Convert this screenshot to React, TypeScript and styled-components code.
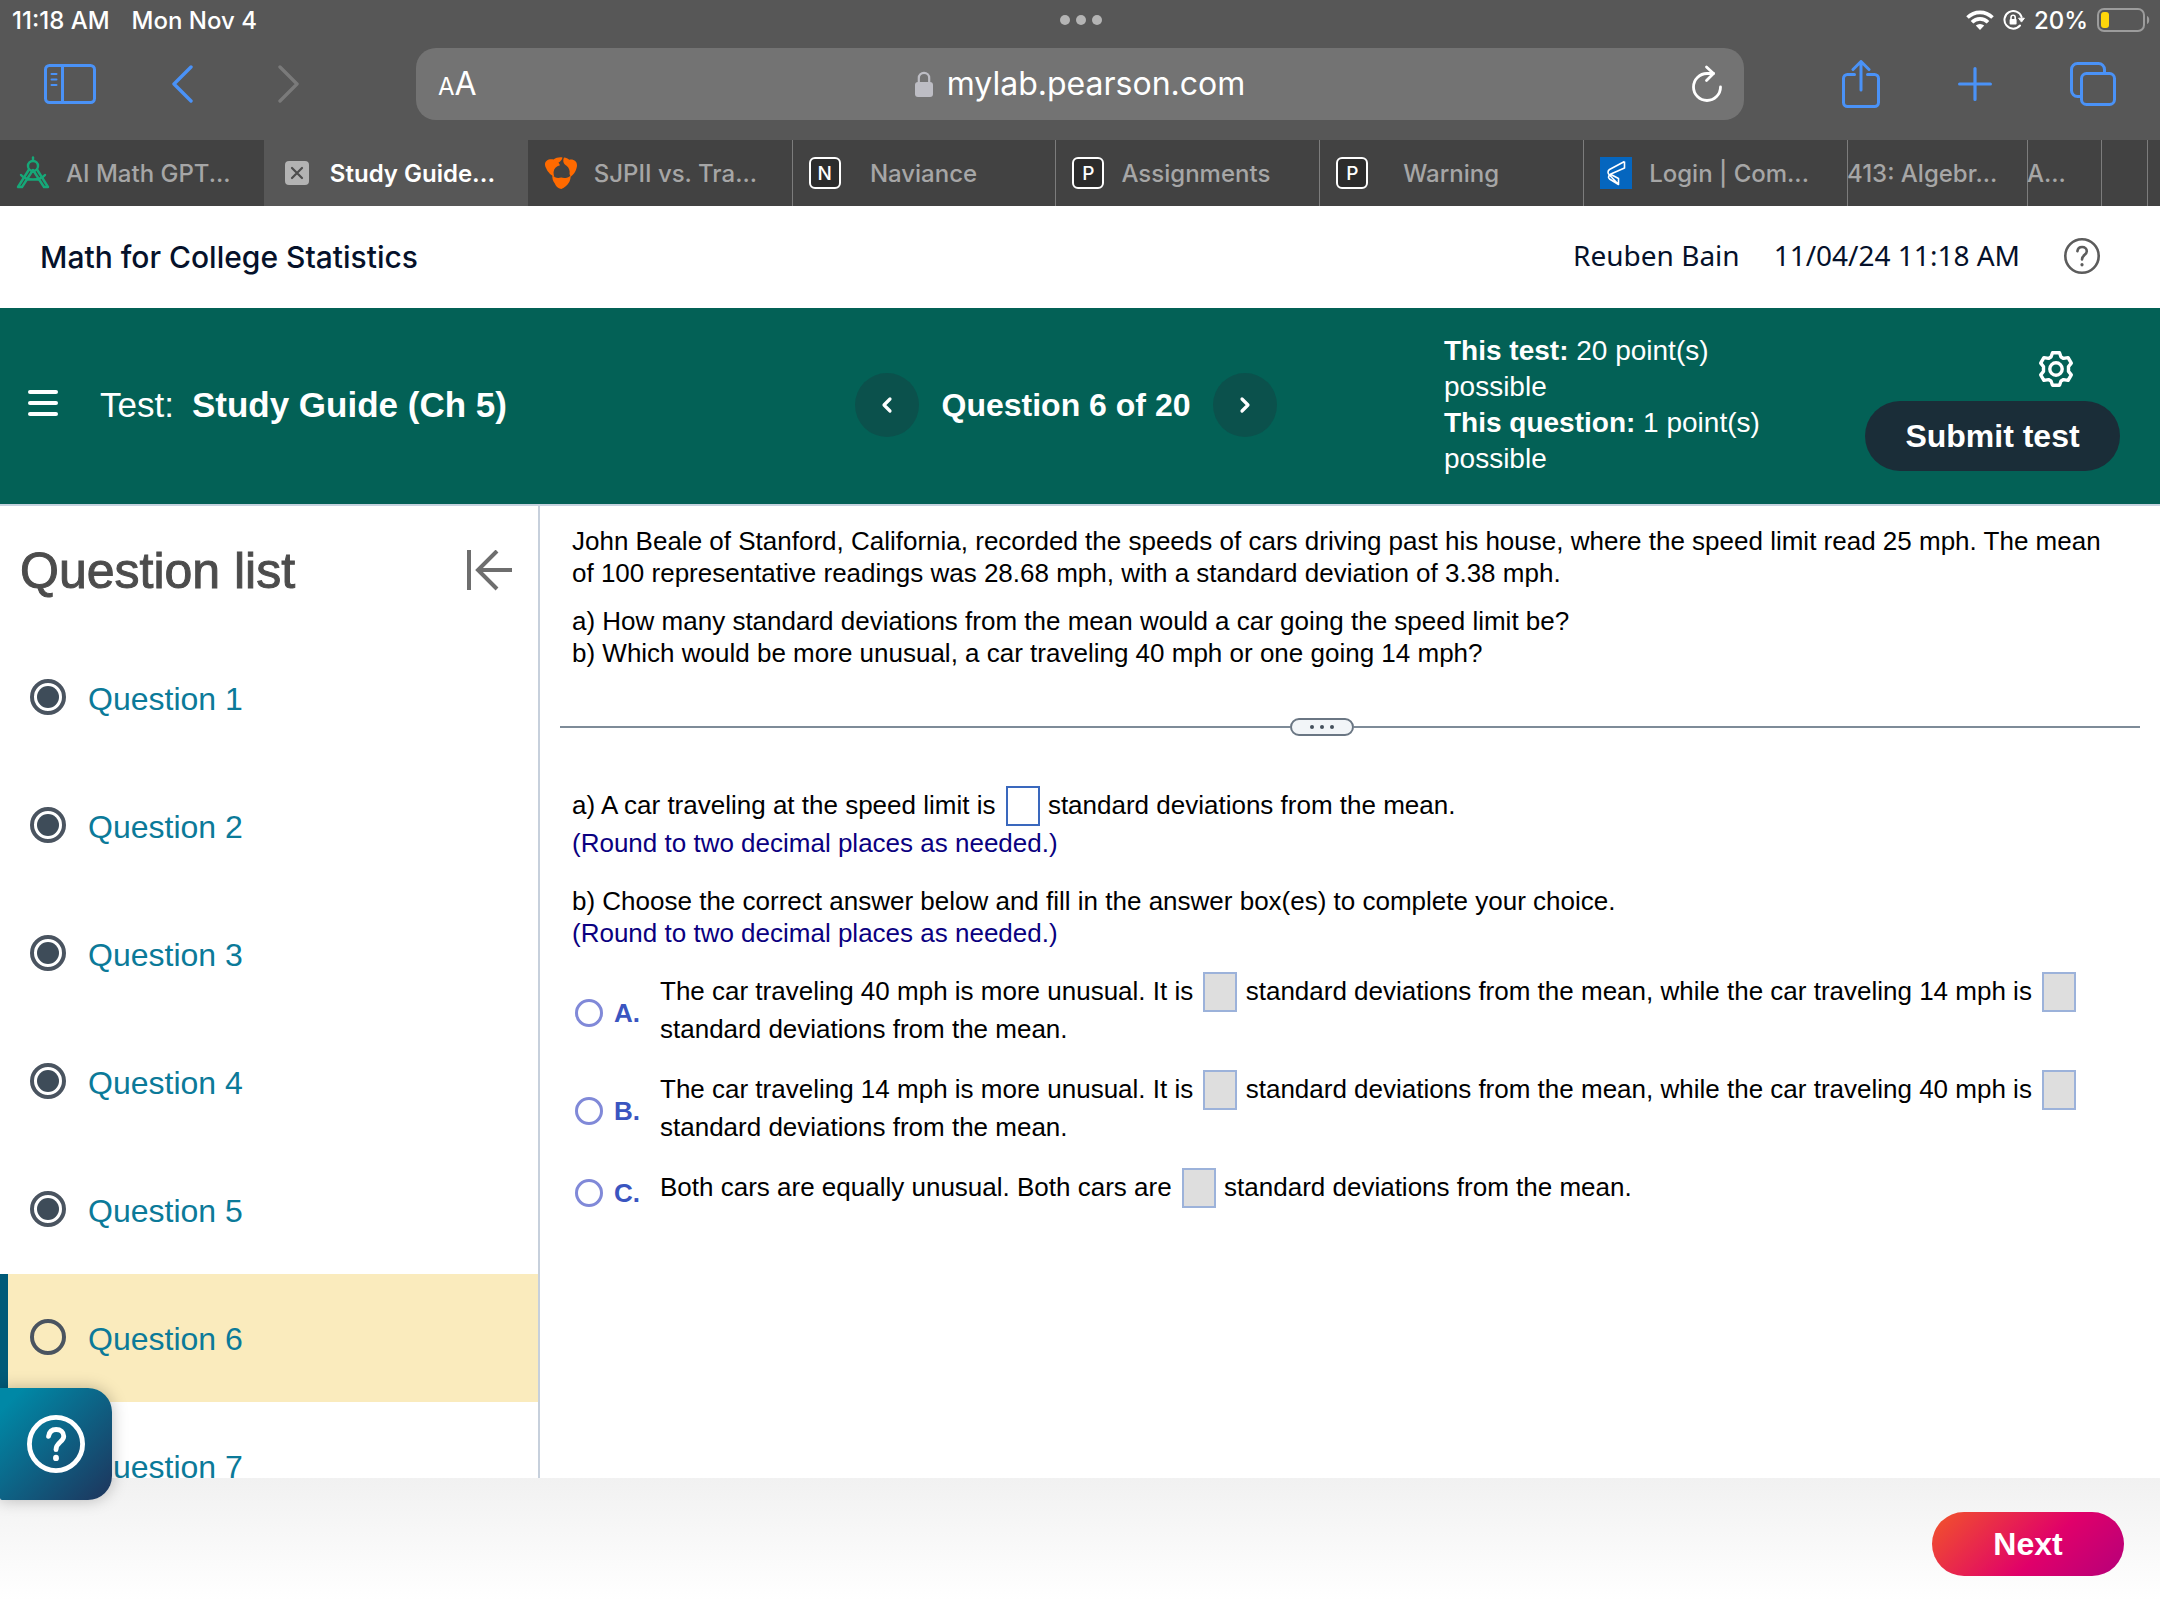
import React, { useState } from "react";
import styled, { createGlobalStyle } from "styled-components";

const sans = `"Liberation Sans", Arial, Helvetica, sans-serif`;
const system = `Inter, "Liberation Sans", sans-serif`;

const GlobalStyle = createGlobalStyle`
  *, *::before, *::after { box-sizing: border-box; }
  body { margin: 0; background: #fff; color: #000; font-family: ${sans}; }
  h1, h2, p, ul { margin: 0; padding: 0; }
  ul { list-style: none; }
  button { border: 0; padding: 0; background: none; color: inherit; font: inherit; cursor: pointer; }
  svg { display: block; flex: none; }
`;

/* ---------- Page frame ---------- */

const Page = styled.div`
  display: flex;
  flex-direction: column;
  height: 100vh;
  overflow: hidden;
`;

/* ---------- Browser chrome ---------- */

const Chrome = styled.div`
  flex: none;
  background: #575757;
  color: #fff;
  font-family: ${system};
`;

const StatusBar = styled.div`
  display: grid;
  grid-template-columns: 1fr auto 1fr;
  align-items: center;
  height: 40px;
  padding: 0 10px 0 12px;
  font-size: 24px;
  font-weight: 500;
`;

const StatusGroup = styled.div<{ $end?: boolean }>`
  display: flex;
  align-items: center;
  justify-content: ${(p) => (p.$end ? "flex-end" : "flex-start")};
  gap: ${(p) => (p.$end ? 9 : 22)}px;
`;

const ToolBar = styled.div`
  display: flex;
  align-items: center;
  height: 100px;
  padding: 0 44px 12px;
`;

const NavGroup = styled.div`
  display: grid;
  grid-template-columns: 127px 107px auto;
  align-items: center;
  justify-content: start;
  flex: none;
  width: 372px;
`;

const ActionGroup = styled.div`
  display: flex;
  align-items: center;
  justify-content: flex-end;
  flex: none;
  gap: 78px;
  width: 372px;
`;

const ChromeButton = styled.button<{ $dim?: boolean }>`
  justify-self: start;
  color: ${(p) => (p.$dim ? "#7a7a7a" : "#4a92f7")};
`;

const AddressField = styled.div`
  display: grid;
  grid-template-columns: 1fr auto 1fr;
  align-items: center;
  flex: 1;
  height: 72px;
  padding: 0 22px;
  border-radius: 20px;
  background: #737373;
`;

const TextSizeButton = styled.button`
  justify-self: start;
  padding-top: 2px;
  font-size: 32px;
  line-height: 40px;

  small {
    font-size: 24px;
  }
`;

const Address = styled.span`
  display: flex;
  align-items: center;
  gap: 14px;
  font-size: 32px;
  line-height: 40px;
`;

const ReloadButton = styled.button`
  justify-self: end;
`;

const TabStrip = styled.div`
  display: flex;
  height: 66px;
  background: #424242;
`;

const Tab = styled.button<{ $active?: boolean; $width?: number; $line?: boolean }>`
  display: flex;
  align-items: center;
  flex: ${(p) => (p.$width ? `0 0 ${p.$width}px` : "1 1 0")};
  min-width: 0;
  overflow: hidden;
  background: ${(p) => (p.$active ? "#575757" : "transparent")};
  box-shadow: ${(p) => (p.$line ? "inset 1px 0 #7c7c7c" : "none")};
  color: ${(p) => (p.$active ? "#fff" : "#a6a6a6")};
  font-size: 24px;
  font-weight: ${(p) => (p.$active ? 600 : 500)};
  white-space: nowrap;
`;

const TabIcon = styled.span`
  display: flex;
  justify-content: center;
  flex: 0 0 66px;
`;

const TabTitle = styled.span`
  flex: 1 0 auto;
  text-align: center;
`;

const TabEnd = styled.span`
  flex: 0 1 66px;
`;

const LetterIcon = styled.span`
  display: flex;
  align-items: center;
  justify-content: center;
  width: 32px;
  height: 32px;
  border: 2px solid #fff;
  border-radius: 6px;
  background: #2c2c2c;
  color: #fff;
  font-size: 19px;
`;

/* ---------- Course header ---------- */

const CourseHeader = styled.header`
  display: flex;
  align-items: center;
  flex: none;
  height: 102px;
  padding: 0 60px 2px 40px;
  color: #05112a;
`;

const CourseName = styled.h1`
  flex: 1;
  padding-top: 2px;
  font-family: ${system};
  font-size: 30px;
  font-weight: 500;
`;

const HeaderText = styled.span`
  margin-left: 34px;
  padding-bottom: 2px;
  font-family: "Noto Sans", ${sans};
  font-size: 28px;
`;

const HelpButton = styled.button`
  margin-left: 44px;
`;

/* ---------- Test bar ---------- */

const TestBar = styled.div`
  display: flex;
  align-items: center;
  flex: none;
  height: 198px;
  padding: 0 40px 2px 28px;
  border-bottom: 2px solid #c7d3df;
  background: #036156;
  color: #fff;
`;

const TestTitle = styled.h2`
  display: flex;
  flex: 1;
  gap: 18px;
  margin-left: 42px;
  font-size: 35px;
  font-weight: 700;
  line-height: 40px;
  white-space: nowrap;

  span {
    font-weight: 400;
  }
`;

const Pager = styled.div`
  display: flex;
  align-items: center;
  justify-content: space-between;
  flex: none;
  width: 422px;
  margin-right: 167px;
  font-size: 32px;
  font-weight: 700;
`;

const PagerButton = styled.button`
  display: flex;
  align-items: center;
  justify-content: center;
  width: 64px;
  height: 64px;
  border-radius: 50%;
  background: #0b514c;
`;

const Points = styled.div`
  flex: none;
  width: 340px;
  margin-right: 81px;
  font-size: 28px;
  line-height: 36px;
`;

const TestActions = styled.div`
  display: flex;
  flex-direction: column;
  align-items: flex-end;
  flex: none;
  gap: 14px;
  padding-top: 12px;
`;

const SettingsButton = styled.button`
  margin-right: 46px;
`;

const SubmitButton = styled.button`
  width: 255px;
  height: 70px;
  border-radius: 35px;
  background: #1a2d38;
  font-size: 32px;
  font-weight: 700;
`;

/* ---------- Work area ---------- */

const WorkArea = styled.div`
  display: flex;
  flex: 1;
  min-height: 0;
`;

const SideBar = styled.nav`
  flex: 0 0 540px;
  overflow: hidden;
  border-right: 2px solid #c7d0dc;
`;

const SideHeader = styled.div`
  display: flex;
  align-items: center;
  justify-content: space-between;
  height: 128px;
  padding: 2px 26px 0 20px;
  color: #4c4c4c;
`;

const SideTitle = styled.h2`
  font-size: 50px;
  font-weight: 400;
  -webkit-text-stroke: 1px currentColor;
`;

const QuestionRow = styled.li<{ $current?: boolean }>`
  display: flex;
  align-items: center;
  gap: 22px;
  height: 128px;
  padding-left: 22px;
  border-left: 8px solid ${(p) => (p.$current ? "#005a78" : "transparent")};
  background: ${(p) => (p.$current ? "#faebbd" : "transparent")};
`;

const QuestionLink = styled.a`
  padding-top: 2px;
  color: #0b7a99;
  font-size: 32px;
  text-decoration: none;
`;

const Content = styled.main`
  flex: 1;
  min-width: 0;
  padding: 19px 20px 0;
  overflow: hidden;
  font-size: 26px;
  line-height: 32px;
`;

const Block = styled.div<{ $top?: number }>`
  margin-top: ${(p) => p.$top ?? 0}px;
  padding: 0 12px;
`;

const Hint = styled.p`
  color: #0a0080;
`;

const Divider = styled.div`
  display: flex;
  align-items: center;
  margin: 49px 0 50px;
`;

const Rule = styled.span<{ $extra?: number }>`
  flex: 1 1 ${(p) => p.$extra ?? 0}px;
  height: 2px;
  background: #7e8b98;
`;

const DividerHandle = styled.button`
  display: flex;
  align-items: center;
  justify-content: center;
  gap: 6px;
  width: 64px;
  height: 18px;
  border: 2px solid #6a7683;
  border-radius: 9px;
  background: #f2f5f8;

  i {
    width: 4px;
    height: 4px;
    border-radius: 50%;
    background: #45505c;
  }
`;

const AnswerInput = styled.input`
  width: 34px;
  height: 40px;
  margin: 0 1px 1px 3px;
  padding: 0 4px;
  border: 2px solid #3a68bd;
  border-radius: 0;
  background: #fff;
  font: inherit;
  vertical-align: -1px;

  &:disabled {
    border-color: #9cb2da;
    background: #dedede;
  }
`;

const ChoiceList = styled.div`
  display: flex;
  flex-direction: column;
  gap: 25px;
  margin-top: 23px;
  padding: 0 12px 0 15px;
`;

const Choice = styled.div`
  display: grid;
  grid-template-columns: 39px 46px 1fr;
  align-items: center;
`;

const Radio = styled.input`
  appearance: none;
  width: 28px;
  height: 28px;
  margin: 8px 0 0;
  border: 3px solid #8089d8;
  border-radius: 50%;
  background: #fff;

  &:checked {
    border-width: 8px;
  }
`;

const Letter = styled.label`
  padding-top: 8px;
  color: #3a55c0;
  font-weight: 700;
`;

/* ---------- Footer ---------- */

const Footer = styled.footer`
  display: flex;
  align-items: flex-start;
  justify-content: flex-end;
  flex: none;
  height: 142px;
  padding: 34px 36px 0;
  background: linear-gradient(#f1f1f1, #fff 86%);
`;

const NextButton = styled.button`
  width: 192px;
  height: 64px;
  border-radius: 32px;
  background: linear-gradient(135deg, #f04e2f 5%, #e0006a 58%, #b5007a);
  color: #fff;
  font-size: 32px;
  font-weight: 700;
`;

const HelpWidget = styled.button`
  position: fixed;
  left: 0;
  bottom: 120px;
  display: flex;
  align-items: center;
  justify-content: center;
  width: 112px;
  height: 112px;
  border-radius: 0 24px 24px 2px;
  background: linear-gradient(135deg, #0088a6 10%, #1e345c);
  box-shadow: 0 0 16px rgba(0, 0, 0, 0.25);
  color: #fff;
`;

/* ---------- Icons ---------- */

const line = {
  fill: "none",
  stroke: "currentColor",
  strokeLinecap: "round",
  strokeLinejoin: "round",
} as const;

const DotsIcon = () => (
  <svg width="42" height="10" viewBox="0 0 42 10" fill="#b4b4b4">
    <circle cx="5" cy="5" r="5" />
    <circle cx="21" cy="5" r="5" />
    <circle cx="37" cy="5" r="5" />
  </svg>
);

const WifiIcon = () => (
  <svg width="28" height="20" viewBox="0 0 28 20" fill="none" stroke="#fff" strokeWidth="3.6">
    <path d="M1.5 7.6a17.6 17.6 0 0 1 25 0" />
    <path d="M6 12.2a11.2 11.2 0 0 1 16 0" />
    <path d="M14 20l-4.2-4.4a6 6 0 0 1 8.4 0z" fill="#fff" stroke="none" />
  </svg>
);

const RotationLockIcon = () => (
  <svg width="22" height="20" viewBox="0 0 22 20" {...line} stroke="#fff" strokeWidth="2">
    <path d="M18.6 7A8.8 8.8 0 1 0 17 15.5" />
    <path d="M16 8.2h5.4l-2.7 3.6z" fill="#fff" strokeWidth="1" />
    <rect x="6.6" y="9" width="7" height="5.6" rx="1" fill="#fff" stroke="none" />
    <path d="M8 9V7.4a2.1 2.1 0 0 1 4.2 0V9" strokeWidth="1.6" />
  </svg>
);

const BatteryIcon = () => (
  <svg width="53" height="24" viewBox="0 0 53 24">
    <rect x="1" y="1" width="46" height="22" rx="6" fill="none" stroke="#9c9c9c" strokeWidth="2" />
    <rect x="4" y="4" width="8" height="16" rx="3" fill="#ffd60a" />
    <path d="M50 8c3 1 3 7 0 8z" fill="#9c9c9c" />
  </svg>
);

const SidebarIcon = () => (
  <svg width="52" height="40" viewBox="0 0 52 40" {...line} strokeWidth="3">
    <rect x="1.5" y="1.5" width="49" height="37" rx="4" />
    <path d="M18.5 2v36" />
    <path d="M7.5 10h5M7.5 15.5h5M7.5 21h5" strokeWidth="2" />
  </svg>
);

const ChevronIcon = ({ flip = false }: { flip?: boolean }) => (
  <svg width="22" height="38" viewBox="0 0 22 38" {...line} strokeWidth="3.4">
    <path d={flip ? "M2 2l17 17L2 36" : "M20 2L3 19l17 17"} />
  </svg>
);

const LockIcon = () => (
  <svg width="18" height="26" viewBox="0 0 18 26">
    <rect x="0" y="11" width="18" height="15" rx="3" fill="#bdbdc4" />
    <path d="M3.8 12V7a5.2 5.2 0 0 1 10.4 0v5" fill="none" stroke="#bdbdc4" strokeWidth="2.2" />
  </svg>
);

const ReloadIcon = () => (
  <svg width="30" height="38" viewBox="0 0 30 38" {...line} stroke="#fff" strokeWidth="2.8">
    <path d="M28.5 22A13.5 13.5 0 1 1 15 8.5h6.5" />
    <path d="M14.5 2l7 6.5-7 7" />
  </svg>
);

const ShareIcon = () => (
  <svg width="38" height="48" viewBox="0 0 38 48" {...line} strokeWidth="3">
    <path d="M12.5 14.5H5.5a4 4 0 0 0-4 4v24a4 4 0 0 0 4 4h27a4 4 0 0 0 4-4v-24a4 4 0 0 0-4-4h-7" />
    <path d="M19 30V2M11 9.5L19 1.5l8 8" />
  </svg>
);

const PlusIcon = () => (
  <svg width="34" height="34" viewBox="0 0 34 34" {...line} strokeWidth="3.2">
    <path d="M17 1.6v30.8M1.6 17h30.8" />
  </svg>
);

const WindowsIcon = () => (
  <svg width="46" height="44" viewBox="0 0 46 44" {...line} strokeWidth="3">
    <rect x="11.5" y="11.5" width="33" height="31" rx="5" />
    <path d="M11.5 34.5H7.5a6 6 0 0 1-6-6v-21a6 6 0 0 1 6-6h21a6 6 0 0 1 6 6v4" />
  </svg>
);

const CompassIcon = () => (
  <svg width="34" height="34" viewBox="0 0 34 34" {...line} stroke="#16a878" strokeWidth="2.4">
    <path d="M17 1.5v3" />
    <circle cx="17" cy="10" r="5" />
    <path d="M13 13.5L2 31h4l11-17 11 17h4L21 13.5" />
    <path d="M11.5 23.5h11M5 19c5 6 19 6 24 0" />
  </svg>
);

const CloseTabIcon = () => (
  <svg width="24" height="24" viewBox="0 0 24 24">
    <rect width="24" height="24" rx="4" fill="#b3b3b3" />
    <path d="M7 7l10 10M17 7L7 17" stroke="#4d4d4d" strokeWidth="2.2" strokeLinecap="round" />
  </svg>
);

const ShieldIcon = () => (
  <svg width="34" height="32" viewBox="0 0 34 32" fill="#ff6a00">
    <path d="M1 8C.6 4 4 1.6 9.5 2.4 12 .6 15.5-.2 18.5.4c-.5 2.5-2 4-4 5.2l1.5 2.6C12 9 10 11.5 9.6 15c-.1 1.6.1 3 .6 4.5C7 18.5 3.8 15 2.4 11.8 1.5 10.5 1.1 9.2 1 8z" />
    <path d="M20 .5c2.2.4 4 1.2 5.3 2.2C30 2 33.2 4.5 33 8.5c-.2 4-2.6 8.6-6.5 11.5-.2-1.2-.5-2-1-3 .6-3.5-.6-6.5-3-8.2C20.5 7.5 19.5 6 19.3 4.5 19.2 3 19.4 1.6 20 .5z" />
    <path d="M8.4 18c2.2 2.8 5 3.6 8.8 2.6 3.6 1 6.8.2 9.4-2.2.2 3-.6 5.4-2 7.6-1.8 2.8-4.2 4.8-7.4 6-3.4-1-5.6-3-6.4-5.6C8.8 24 8 21 8.4 18z" />
  </svg>
);

const RibbonIcon = () => (
  <svg width="32" height="32" viewBox="0 0 32 32">
    <rect width="32" height="32" fill="#0566bf" />
    <path
      d="M24.5 4.500L9.500 12.500C7.500 14 7.500 16.500 9.500 18L18.500 27.500V21.500L10 17M24.500 4.500V11L12 16.500C8.500 18 7.500 20 9.500 22L18.500 27.500"
      fill="none"
      stroke="#fff"
      strokeWidth="1.6"
      strokeLinejoin="round"
    />
  </svg>
);

const HelpIcon = ({ size, weight, color }: { size: number; weight: number; color: string }) => (
  <svg width={size} height={size} viewBox="0 0 36 36" fill="none" stroke={color} strokeWidth={weight} strokeLinecap="round">
    <circle cx="18" cy="18" r={18 - weight / 2} />
    <path d="M13.4 13.2c.4-2.8 2.3-4.2 4.7-4.2 2.7 0 4.7 1.7 4.7 4.2 0 3.6-4.8 3.7-4.8 8.3" />
    <path d="M18 26.5v.3" strokeWidth={weight + 0.6} />
  </svg>
);

const MenuIcon = () => (
  <svg width="30" height="30" viewBox="0 0 30 30" fill="#fff">
    <rect width="30" height="4" rx="2" />
    <rect y="11" width="30" height="4" rx="2" />
    <rect y="22" width="30" height="4" rx="2" />
  </svg>
);

const SmallChevron = ({ flip = false }: { flip?: boolean }) => (
  <svg width="12" height="18" viewBox="0 0 12 18" {...line} strokeWidth="3.2">
    <path d={flip ? "M3 3l6 6-6 6" : "M9 3L3 9l6 6"} />
  </svg>
);

const GearIcon = () => (
  <svg width="36" height="36" viewBox="0 0 36 36" {...line} stroke="#fff" strokeWidth="3.4">
    <path d="M14.5 1.8h7l1.5 4.2 2.5 1.4 4.6-.8 3.2 5.6-2.8 3.4v4.8l2.8 3.4-3.2 5.6-4.6-.8-2.5 1.4-1.5 4.2h-7L13 30l-2.5-1.4-4.6.8-3.2-5.6 2.8-3.4v-4.8l-2.8-3.4 3.2-5.6 4.6.8L13 6z" />
    <circle cx="18" cy="18" r="6.2" />
  </svg>
);

const CollapseIcon = () => (
  <svg width="46" height="42" viewBox="0 0 46 42" fill="none" stroke="#6e6e6e" strokeWidth="4">
    <path d="M3 0v40M11 20h35M31 1L12 20l19 19" />
  </svg>
);

const StatusIcon = ({ filled }: { filled: boolean }) => (
  <svg width="36" height="38" viewBox="0 0 36 38">
    <circle cx="18" cy="18" r="16" fill={filled ? "#fff" : "none"} stroke="#4a5460" strokeWidth="4" />
    {filled && <circle cx="18" cy="18" r="11" fill="#3e4c59" />}
  </svg>
);

/* ---------- Data ---------- */

const tabs = [
  { title: "AI Math GPT...", icon: <CompassIcon /> },
  { title: "Study Guide...", icon: <CloseTabIcon />, active: true },
  { title: "SJPII vs. Tra...", icon: <ShieldIcon /> },
  { title: "Naviance", icon: <LetterIcon>N</LetterIcon>, line: true },
  { title: "Assignments", icon: <LetterIcon>P</LetterIcon>, line: true },
  { title: "Warning", icon: <LetterIcon>P</LetterIcon>, line: true },
  { title: "Login | Com...", icon: <RibbonIcon />, line: true },
];

const stackedTabs = [
  { title: "413: Algebr...", width: 180 },
  { title: "A...", width: 74 },
  { title: "", width: 46 },
  { title: "", width: 13 },
];

const questions = [1, 2, 3, 4, 5, 6, 7];
const currentQuestion = 6;

const Blank = ({ label, open = false }: { label: string; open?: boolean }) => (
  <AnswerInput type="text" aria-label={label} disabled={!open} />
);

const choices = [
  {
    letter: "A",
    body: (
      <>
        The car traveling 40 mph is more unusual. It is <Blank label="Deviations at 40 mph" /> standard
        deviations from the mean, while the car traveling 14 mph is <Blank label="Deviations at 14 mph" />{" "}
        standard deviations from the mean.
      </>
    ),
  },
  {
    letter: "B",
    body: (
      <>
        The car traveling 14 mph is more unusual. It is <Blank label="Deviations at 14 mph" /> standard
        deviations from the mean, while the car traveling 40 mph is <Blank label="Deviations at 40 mph" />{" "}
        standard deviations from the mean.
      </>
    ),
  },
  {
    letter: "C",
    body: (
      <>
        Both cars are equally unusual. Both cars are <Blank label="Deviations of both cars" /> standard
        deviations from the mean.
      </>
    ),
  },
];

/* ---------- App ---------- */

export default function App() {
  const [choice, setChoice] = useState<string | null>(null);

  return (
    <Page>
      <GlobalStyle />

      <Chrome>
        <StatusBar>
          <StatusGroup>
            <span>11:18 AM</span>
            <span>Mon Nov 4</span>
          </StatusGroup>
          <DotsIcon />
          <StatusGroup $end>
            <WifiIcon />
            <RotationLockIcon />
            <span>20%</span>
            <BatteryIcon />
          </StatusGroup>
        </StatusBar>

        <ToolBar>
          <NavGroup>
            <ChromeButton aria-label="Show sidebar"><SidebarIcon /></ChromeButton>
            <ChromeButton aria-label="Back"><ChevronIcon /></ChromeButton>
            <ChromeButton aria-label="Forward" $dim><ChevronIcon flip /></ChromeButton>
          </NavGroup>
          <AddressField>
            <TextSizeButton aria-label="Page settings"><small>A</small>A</TextSizeButton>
            <Address><LockIcon />mylab.pearson.com</Address>
            <ReloadButton aria-label="Reload"><ReloadIcon /></ReloadButton>
          </AddressField>
          <ActionGroup>
            <ChromeButton aria-label="Share"><ShareIcon /></ChromeButton>
            <ChromeButton aria-label="New tab"><PlusIcon /></ChromeButton>
            <ChromeButton aria-label="All tabs"><WindowsIcon /></ChromeButton>
          </ActionGroup>
        </ToolBar>

        <TabStrip>
          {tabs.map((tab, i) => (
            <Tab key={i} $active={tab.active} $line={tab.line}>
              <TabIcon>{tab.icon}</TabIcon>
              <TabTitle>{tab.title}</TabTitle>
              <TabEnd />
            </Tab>
          ))}
          {stackedTabs.map((tab, i) => (
            <Tab key={i} $width={tab.width} $line aria-label={tab.title || "Tab"}>
              {tab.title}
            </Tab>
          ))}
        </TabStrip>
      </Chrome>

      <CourseHeader>
        <CourseName>Math for College Statistics</CourseName>
        <HeaderText>Reuben Bain</HeaderText>
        <HeaderText>11/04/24 11:18 AM</HeaderText>
        <HelpButton aria-label="Help"><HelpIcon size={36} weight={2.6} color="#5c5c5c" /></HelpButton>
      </CourseHeader>

      <TestBar>
        <button aria-label="Menu"><MenuIcon /></button>
        <TestTitle><span>Test:</span>Study Guide (Ch 5)</TestTitle>
        <Pager>
          <PagerButton aria-label="Previous question"><SmallChevron /></PagerButton>
          Question 6 of 20
          <PagerButton aria-label="Next question"><SmallChevron flip /></PagerButton>
        </Pager>
        <Points>
          <p><strong>This test:</strong> 20 point(s)<br />possible</p>
          <p><strong>This question:</strong> 1 point(s)<br />possible</p>
        </Points>
        <TestActions>
          <SettingsButton aria-label="Settings"><GearIcon /></SettingsButton>
          <SubmitButton>Submit test</SubmitButton>
        </TestActions>
      </TestBar>

      <WorkArea>
        <SideBar>
          <SideHeader>
            <SideTitle>Question list</SideTitle>
            <button aria-label="Collapse list"><CollapseIcon /></button>
          </SideHeader>
          <ul>
            {questions.map((n) => (
              <QuestionRow key={n} $current={n === currentQuestion}>
                <StatusIcon filled={n < currentQuestion} />
                <QuestionLink href={`#question-${n}`}>Question {n}</QuestionLink>
              </QuestionRow>
            ))}
          </ul>
        </SideBar>

        <Content>
          <Block>
            <p>
              John Beale of Stanford, California, recorded the speeds of cars driving past his house, where
              the speed limit read 25 mph. The mean of 100 representative readings was 28.68 mph, with a
              standard deviation of 3.38 mph.
            </p>
          </Block>
          <Block $top={16}>
            <p>a) How many standard deviations from the mean would a car going the speed limit be?</p>
            <p>b) Which would be more unusual, a car traveling 40 mph or one going 14 mph?</p>
          </Block>

          <Divider>
            <Rule />
            <DividerHandle aria-label="Resize panes"><i /><i /><i /></DividerHandle>
            <Rule $extra={56} />
          </Divider>

          <Block>
            <p>
              a) A car traveling at the speed limit is <Blank label="Deviations at the speed limit" open />{" "}
              standard deviations from the mean.
            </p>
            <Hint>(Round to two decimal places as needed.)</Hint>
          </Block>
          <Block $top={26}>
            <p>b) Choose the correct answer below and fill in the answer box(es) to complete your choice.</p>
            <Hint>(Round to two decimal places as needed.)</Hint>
          </Block>

          <ChoiceList>
            {choices.map(({ letter, body }) => (
              <Choice key={letter}>
                <Radio
                  type="radio"
                  name="choice"
                  id={`choice-${letter}`}
                  checked={choice === letter}
                  onChange={() => setChoice(letter)}
                />
                <Letter htmlFor={`choice-${letter}`}>{letter}.</Letter>
                <p>{body}</p>
              </Choice>
            ))}
          </ChoiceList>
        </Content>
      </WorkArea>

      <Footer>
        <NextButton>Next</NextButton>
      </Footer>

      <HelpWidget aria-label="Support">
        <HelpIcon size={58} weight={3} color="#fff" />
      </HelpWidget>
    </Page>
  );
}
